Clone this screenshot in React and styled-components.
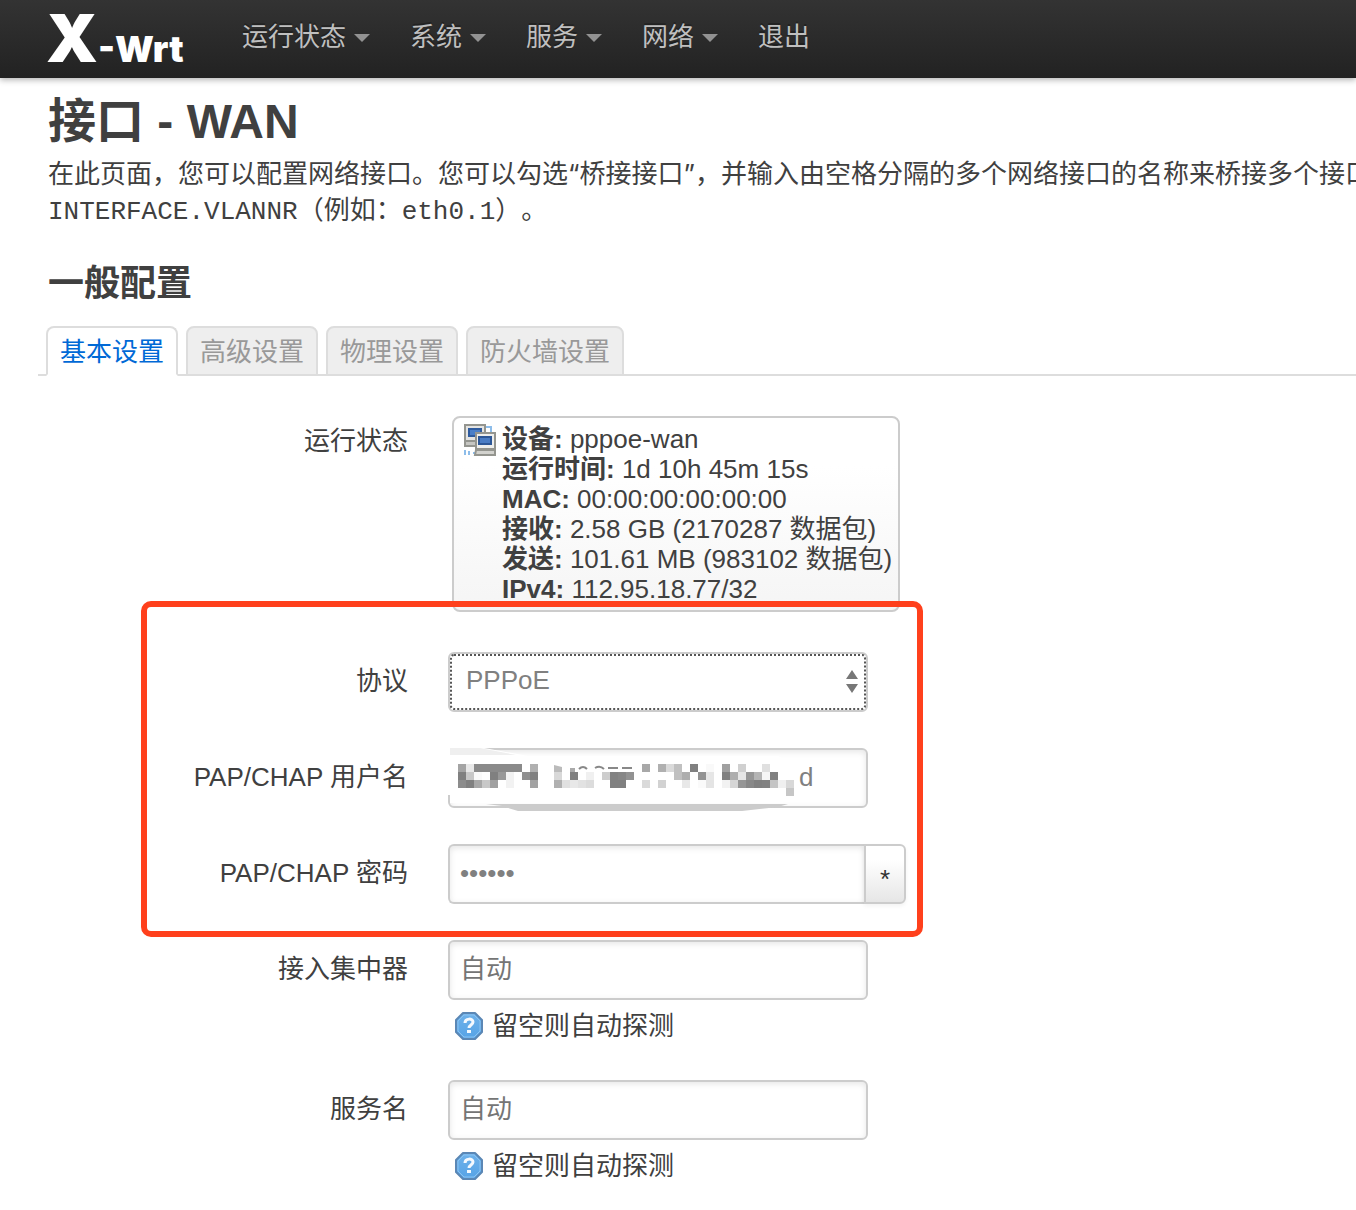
import React, { useState } from "react";
import styled, { createGlobalStyle } from "styled-components";

const sans = `"Liberation Sans", "Noto Sans CJK SC", sans-serif`;
const mono = `"Liberation Mono", "Noto Sans CJK SC", monospace`;

const GlobalStyle = createGlobalStyle`
  *, *::before, *::after { box-sizing: border-box; }
  body {
    margin: 0;
    background: #fff;
    color: #404040;
    font: 26px/36px ${sans};
    text-spacing-trim: space-all;
    overflow-x: hidden;
  }
`;

const Header = styled.header`
  display: flex;
  align-items: center;
  height: 78px;
  padding-left: 46px;
  background: linear-gradient(#333, #222);
  box-shadow: 0 2px 6px rgba(0, 0, 0, 0.3);
`;

const Brand = styled.a`
  width: 176px;
  padding-top: 8px;
  color: #fff;
  font: 900 36px/60px Inter, sans-serif;
  text-decoration: none;
  white-space: nowrap;
`;

const BrandInitial = styled.span`
  font-size: 66px;
`;

const Nav = styled.nav`
  display: flex;
  padding-bottom: 4px;
`;

const NavLink = styled.a`
  display: flex;
  align-items: center;
  gap: 8px;
  padding: 0 20px;
  color: #bfbfbf;
  text-decoration: none;
  text-shadow: 0 -2px 0 rgba(0, 0, 0, 0.25);
  white-space: nowrap;
`;

const Caret = styled.span`
  margin-top: 2px;
  border: 8px solid transparent;
  border-top-color: #929292;
  border-bottom: 0;
`;

const Main = styled.main`
  padding: 10px 0 24px 38px;
`;

const Title = styled.h1`
  margin: 0;
  padding-left: 10px;
  font-size: 48px;
  line-height: 68px;
`;

const Intro = styled.p`
  margin: 0 0 20px;
  padding-left: 10px;
  white-space: nowrap;
`;

const Quote = styled.span`
  font-family: Inter, sans-serif;
  line-height: 26px;
`;

const Code = styled.code`
  font-family: ${mono};
  font-size: 26px;
  line-height: 26px;
`;

const SectionTitle = styled.h3`
  margin: 0 0 6px;
  padding-left: 10px;
  font-size: 36px;
  line-height: 72px;
`;

const TabList = styled.div`
  display: flex;
  gap: 8px;
  padding-left: 8px;
  border-bottom: 2px solid #ddd;
`;

const Tab = styled.button`
  margin: 0 0 -2px;
  padding: 6px 12px;
  border: 2px solid #ddd;
  border-bottom-color: ${(p) => (p.$active ? "#fff" : "#ddd")};
  border-radius: 8px 8px 0 0;
  background: ${(p) => (p.$active ? "#fff" : "#eee")};
  color: ${(p) => (p.$active ? "#0069d6" : "#999")};
  font: inherit;
  height: 50px;
  white-space: nowrap;
`;

const Form = styled.form`
  display: flex;
  flex-direction: column;
  gap: 36px;
  padding-top: 36px;
`;

const Row = styled.div`
  display: grid;
  grid-template-columns: 370px minmax(0, 1fr);
  column-gap: 40px;
`;

const labelStyle = `
  padding-top: 11px;
  text-align: right;
`;

const Label = styled.label`
  ${labelStyle}
`;

const Caption = styled.div`
  ${labelStyle}
`;

const Marked = styled.div`
  position: relative;
  display: flex;
  flex-direction: column;
  gap: 36px;
`;

const Outline = styled.div`
  position: absolute;
  top: -51px;
  bottom: -33px;
  left: 103px;
  width: 782px;
  border: 6px solid #ff401c;
  border-radius: 10px;
  pointer-events: none;
`;

const Status = styled.div`
  display: flex;
  justify-self: start;
  gap: 6px;
  margin: 4px;
  padding: 6px 6px 6px 10px;
  border: 2px solid #ccc;
  border-radius: 8px;
  background: linear-gradient(#fff, #fff 25%, #f5f5f5);
  line-height: 30px;
  white-space: nowrap;
`;

const Field = styled.div`
  position: relative;
  display: flex;
  width: 420px;
`;

const Input = styled.input`
  flex: 1;
  min-width: 0;
  width: 100%;
  height: 60px;
  padding: 8px 10px 10px;
  padding-left: ${(p) => (p.$masked ? "349px" : "10px")};
  border: 2px solid #ccc;
  border-radius: 6px;
  background: #fff;
  box-shadow: inset 0 2px 6px rgba(0, 0, 0, 0.1);
  color: #808080;
  font: inherit;
  outline: none;
  &::placeholder { color: #757575; opacity: 1; }
`;

const Select = styled.select`
  appearance: none;
  width: 100%;
  height: 60px;
  padding: 0 40px 4px 16px;
  border: 2px solid #ccc;
  border-radius: 6px;
  background: #fff;
  color: #808080;
  font: inherit;
  outline: 2px dotted #555;
  outline-offset: -4px;
`;

const SelectArrows = styled.svg`
  position: absolute;
  right: 10px;
  top: 18px;
  pointer-events: none;
`;

const Mosaic = styled.svg`
  position: absolute;
  left: 0;
  top: 0;
  pointer-events: none;
`;

const PasswordField = styled(Field)`
  width: 458px;
  ${Input} {
    border-right: 0;
    border-radius: 6px 0 0 6px;
  }
`;

const Reveal = styled.button`
  width: 42px;
  height: 60px;
  padding: 10px 0 0;
  border: 2px solid #ccc;
  border-radius: 0 6px 6px 0;
  background: linear-gradient(#fff, #fff 25%, #e6e6e6);
  box-shadow: 0 2px 4px rgba(0, 0, 0, 0.05);
  color: #333;
  font: 26px/36px ${sans};
`;

const Hint = styled.div`
  display: flex;
  align-items: center;
  gap: 9px;
  margin-top: 8px;
  padding-left: 7px;
`;

const StatusIcon = styled.svg`
  flex: none;
`;

const menu = [
  { text: "运行状态", caret: true },
  { text: "系统", caret: true },
  { text: "服务", caret: true },
  { text: "网络", caret: true },
  { text: "退出" },
];

const tabs = ["基本设置", "高级设置", "物理设置", "防火墙设置"];

const stats = [
  ["设备:", "pppoe-wan"],
  ["运行时间:", "1d 10h 45m 15s"],
  ["MAC:", "00:00:00:00:00:00"],
  ["接收:", "2.58 GB (2170287 数据包)"],
  ["发送:", "101.61 MB (983102 数据包)"],
  ["IPv4:", "112.95.18.77/32"],
];

// Each mosaic row maps a column index to a grey level.
const mosaicRows = [
  { 0: 164, 1: 232, 2: 138, 3: 138, 4: 138, 5: 138, 6: 138, 7: 138, 9: 176, 23: 168, 25: 176, 26: 218, 27: 192, 29: 128, 31: 249, 33: 160, 35: 208, 38: 224 },
  { 0: 128, 1: 200, 2: 250, 4: 128, 5: 152, 6: 242, 8: 144, 9: 128, 12: 216, 14: 128, 16: 240, 18: 205, 19: 130, 20: 134, 21: 146, 27: 192, 28: 174, 30: 146, 31: 230, 33: 128, 34: 174, 35: 230, 36: 150, 37: 180, 38: 246, 39: 128 },
  { 0: 140, 1: 128, 2: 168, 3: 200, 4: 160, 6: 242, 9: 162, 12: 176, 13: 224, 14: 232, 15: 226, 16: 220, 19: 128, 20: 128, 23: 218, 25: 210, 28: 232, 30: 250, 31: 228, 33: 242, 34: 214, 35: 150, 36: 136, 37: 128, 38: 130, 39: 196, 40: 240, 41: 216 },
  { 41: 198 },
];

function ConnectionIcon() {
  return (
    <StatusIcon width="32" height="32" viewBox="0 0 32 32" aria-hidden="true">
      <path d="M22 3h5v5M1 26v5M5 27v4M9 29h3" fill="none" stroke="#8dbdea" strokeWidth="2" />
      <rect x="1" y="1" width="20" height="16" fill="#e4e4e2" stroke="#94958f" strokeWidth="2" />
      <rect x="4" y="4" width="14" height="9" fill="#2f5c9f" />
      <rect x="6" y="6" width="10" height="5" fill="#4b7fc8" />
      <path d="M1 17h11v5H1z" fill="#c6c6c2" stroke="#94958f" strokeWidth="2" />
      <rect x="12" y="9" width="19" height="16" fill="#eeeeec" stroke="#94958f" strokeWidth="2" />
      <rect x="14" y="12" width="14" height="9" fill="#2d5797" />
      <rect x="16" y="14" width="10" height="5" fill="#4a7cc4" />
      <path d="M12 26h19v5H11z" fill="#d2d2ce" stroke="#94958f" strokeWidth="2" />
    </StatusIcon>
  );
}

function HelpIcon() {
  return (
    <svg width="28" height="28" viewBox="0 0 28 28" aria-hidden="true">
      <defs>
        <linearGradient id="help" x1="0" y1="0" x2="0" y2="1">
          <stop offset="0" stopColor="#6fb2ea" />
          <stop offset="1" stopColor="#56a3e6" />
        </linearGradient>
      </defs>
      <path d="M8 1h12l7 7v12l-7 7H8l-7-7V8z" fill="url(#help)" stroke="#5b87b5" strokeWidth="2" strokeLinejoin="round" />
      <path d="M9 3h10l6 6v10l-6 6H9l-6-6V9z" fill="none" stroke="#8cc3f1" strokeWidth="1" />
      <path d="M10 11c0-5 8-5 8-1 0 3-4 3-4 6" fill="none" stroke="#f4f9fe" strokeWidth="3" />
      <rect x="12" y="18" width="4" height="3" fill="#f4f9fe" />
    </svg>
  );
}

function NameMosaic() {
  return (
    <Mosaic width="420" height="66" viewBox="0 0 420 66" aria-hidden="true">
      <path d="M0 0H36L80 8H330L348 16V46L334 55H2V47H0z" fill="#fff" />
      <path d="M2 0H32L68 7H2z" fill="#efefef" />
      <path d="M38 56H340L330 59L294 63H70L54 58z" fill="#ccc" />
      {mosaicRows.map((row, y) =>
        Object.entries(row).map(([x, v]) => (
          <rect key={`${x}-${y}`} x={10 + x * 8} y={16 + y * 8} width="8" height="8" fill={`rgb(${v},${v},${v})`} />
        ))
      )}
      <path d="M106 17l8 2v5h-8z" fill="#bbb" />
      <path d="M122 20h5v4h-5z" fill="#aaa" />
      <path d="M131 21q4-4 8 0M147 20q5-3 9 1M160 20h10M174 20h10" fill="none" stroke="#888" strokeWidth="2" />
    </Mosaic>
  );
}

function AutoRow({ id, label }) {
  return (
    <Row>
      <Label htmlFor={id}>{label}</Label>
      <div>
        <Field>
          <Input id={id} placeholder="自动" />
        </Field>
        <Hint>
          <HelpIcon />
          <span>留空则自动探测</span>
        </Hint>
      </div>
    </Row>
  );
}

export default function App() {
  const [active, setActive] = useState(0);
  const [shown, setShown] = useState(false);

  return (
    <>
      <GlobalStyle />
      <Header>
        <Brand href="#">
          <BrandInitial>X</BrandInitial>-Wrt
        </Brand>
        <Nav>
          {menu.map((item) => (
            <NavLink href="#" key={item.text}>
              {item.text}
              {item.caret && <Caret />}
            </NavLink>
          ))}
        </Nav>
      </Header>
      <Main>
        <Title>接口 - WAN</Title>
        <Intro>
          在此页面，您可以配置网络接口。您可以勾选<Quote>“</Quote>桥接接口<Quote>”</Quote>，并输入由空格分隔的多个网络接口的名称来桥接多个接口
          <br />
          <Code>INTERFACE.VLANNR</Code>（例如：<Code>eth0.1</Code>）。
        </Intro>
        <SectionTitle>一般配置</SectionTitle>
        <TabList role="tablist">
          {tabs.map((name, i) => (
            <Tab key={name} type="button" role="tab" aria-selected={i === active} $active={i === active} onClick={() => setActive(i)}>
              {name}
            </Tab>
          ))}
        </TabList>
        <Form>
          <Row>
            <Caption>运行状态</Caption>
            <Status>
              <ConnectionIcon />
              <div>
                {stats.map(([name, value]) => (
                  <div key={name}>
                    <strong>{name}</strong> {value}
                  </div>
                ))}
              </div>
            </Status>
          </Row>
          <Marked>
            <Row>
              <Label htmlFor="proto">协议</Label>
              <Field>
                <Select id="proto" defaultValue="pppoe">
                  <option value="pppoe">PPPoE</option>
                </Select>
                <SelectArrows width="12" height="24" viewBox="0 0 12 24" aria-hidden="true">
                  <path d="M6 0l6 9H0zM6 23l6-9H0z" fill="#777" />
                </SelectArrows>
              </Field>
            </Row>
            <Row>
              <Label htmlFor="username">PAP/CHAP 用户名</Label>
              <Field>
                <Input id="username" defaultValue="d" $masked />
                <NameMosaic />
              </Field>
            </Row>
            <Row>
              <Label htmlFor="password">PAP/CHAP 密码</Label>
              <PasswordField>
                <Input id="password" type={shown ? "text" : "password"} defaultValue="secret" />
                <Reveal type="button" aria-pressed={shown} onClick={() => setShown(!shown)}>
                  *
                </Reveal>
              </PasswordField>
            </Row>
            <Outline />
          </Marked>
          <AutoRow id="ac" label="接入集中器" />
          <AutoRow id="service" label="服务名" />
        </Form>
      </Main>
    </>
  );
}
